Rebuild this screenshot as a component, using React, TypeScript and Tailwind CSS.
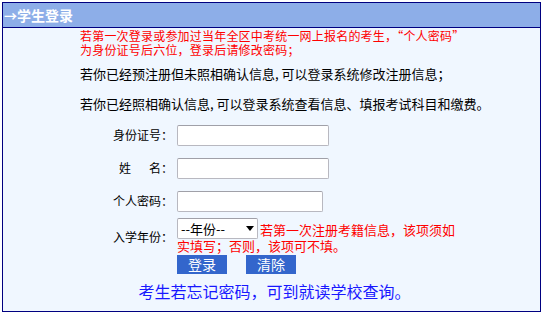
import React from 'react';

const cjk = { fontFamily: '"Noto Sans CJK SC", "Liberation Sans", sans-serif' };

const Field = ({ label, width }: { label: React.ReactNode; width: string }) => (
  <div className="flex items-center h-[22px]">
    <div className="w-[96px] text-right text-[12px] text-black pr-[4px]">{label}</div>
    <div className={`${width} h-[21px] bg-white border border-[#b8b8c0] border-t-[#a0a0a8] rounded-[2px]`} />
  </div>
);

export default function App() {
  return (
    <div className="w-[543px] h-[314px] bg-white p-[2px]" style={cjk}>
      <div className="w-[539px] h-[310px] border border-[#000080] bg-[#f0f7ff] flex flex-col">
        <div className="h-[25px] bg-[#8daee8] border-b border-[#000080] flex items-center pl-[1px] text-white font-bold text-[14px] leading-none">
          <span className="text-[13px]">→</span>
          <span>学生登录</span>
        </div>

        <div className="pl-[77px] pt-[1px] text-[12px] leading-[14px] tracking-[0.2px] text-[#ff0000]">
          <div>若第一次登录或参加过当年全区中考统一网上报名的考生，“个人密码”</div>
          <div>为身份证号后六位，登录后请修改密码；</div>
        </div>

        <div className="pl-[77px] mt-[9px] text-[13px] leading-[16px] text-black">
          <div>若你已经预注册但未照相确认信息, 可以登录系统修改注册信息；</div>
          <div className="mt-[14px]">若你已经照相确认信息, 可以登录系统查看信息、填报考试科目和缴费。</div>
        </div>

        <div className="mt-[12px] flex flex-col gap-[11px] pl-[78px]">
          <Field label="身份证号：" width="w-[152px]" />
          <Field
            label={
              <span className="inline-flex w-[54px] justify-between">
                <span>姓</span>
                <span>名：</span>
              </span>
            }
            width="w-[152px]"
          />
          <Field label="个人密码：" width="w-[146px]" />
        </div>

        <div className="flex pl-[78px] mt-[6px]">
          <div className="w-[96px] text-right text-[12px] text-black pr-[4px] pt-[10px]">入学年份：</div>
          <div className="w-[250px]">
            <div className="flex items-start">
              <div className="w-[81px] h-[21px] bg-white border border-[#b8b8c0] border-t-[#a0a0a8] rounded-[2px] flex items-center justify-between px-[3px] text-[13px] text-black leading-none shrink-0">
                <span>--年份--</span>
                <svg width="8" height="5" viewBox="0 0 8 5">
                  <path d="M0 0h8L4 5z" fill="#000" />
                </svg>
              </div>
              <div className="text-[13px] leading-[14px] text-[#ff0000] pl-[2px] pt-[5px] whitespace-nowrap">
                若第一次注册考籍信息，该项须如
              </div>
            </div>
            <div className="text-[13px] leading-[14px] text-[#ff0000]">实填写；否则，该项可不填。</div>
            <div className="flex gap-[19px] mt-[2px]">
              <div className="w-[50px] h-[19px] bg-[#3366cc] text-white text-[14px] leading-[19px] text-center">登录</div>
              <div className="w-[50px] h-[19px] bg-[#3366cc] text-white text-[14px] leading-[19px] text-center">清除</div>
            </div>
          </div>
        </div>

        <div className="text-center text-[16px] leading-[20px] text-[#1818ff] mt-[7px] pl-[6px]">
          考生若忘记密码，可到就读学校查询。
        </div>
      </div>
    </div>
  );
}
